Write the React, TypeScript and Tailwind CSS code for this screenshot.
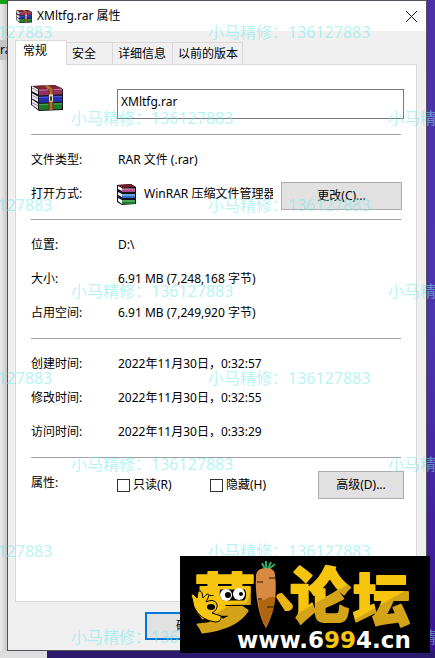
import { useState } from 'react';

const TABS = ['常规', '安全', '详细信息', '以前的版本'];
const TAB_WIDTHS = ['w-[46px]', 'w-[60px]', 'w-[70px]'];

const SIZES = [
  { label: '位置:', value: 'D:\\' },
  { label: '大小:', value: '6.91 MB (7,248,168 字节)' },
  { label: '占用空间:', value: '6.91 MB (7,249,920 字节)' },
];

const DATES = [
  { label: '创建时间:', value: '2022年11月30日，0:32:57' },
  { label: '修改时间:', value: '2022年11月30日，0:32:55' },
  { label: '访问时间:', value: '2022年11月30日，0:33:29' },
];

function BooksIcon({ className }: { className: string }) {
  return (
    <svg viewBox="0 0 32 25" preserveAspectRatio="none" className={className} aria-hidden="true">
      <path d="M0 1 24 0 32 4V24L8 25 0 19Z" fill="#17131c" />
      <path d="M1 1 7 4V9L1 6ZM1 8 7 11V16L1 13ZM1 14 7 18V23L1 19Z" fill="#f0eef2" />
      <path d="M1 3 7 6M1 10 7 13M1 17 7 20" stroke="#9b97a0" strokeWidth="1" />
      <path d="M2 1 23 0 31 3 8 4Z" fill="#7c2438" />
      <path d="M8 4 31 3V9L8 10Z" fill="#97305e" />
      <path d="M8 5 31 4" stroke="#c96a96" strokeWidth="1" />
      <path d="M8 11 31 10V16L8 17Z" fill="#2530b0" />
      <path d="M8 12 31 11" stroke="#4f62dc" strokeWidth="1" />
      <path d="M8 18 31 17V23L8 24Z" fill="#1c7a24" />
      <path d="M8 19 31 18" stroke="#48b04c" strokeWidth="1" />
      <path d="M13 0 17 0 22 4V24H18V5Z" fill="#b06c30" />
      <path d="M18 4V24M22 4V24" stroke="#5c2f14" strokeWidth="1" />
      <rect x="18" y="9" width="4" height="7" fill="#d9d5c8" />
      <rect x="19" y="11" width="2" height="4" fill="#3b3838" />
    </svg>
  );
}

function BookStackIcon({ className }: { className: string }) {
  return (
    <svg viewBox="0 0 19 21" className={className} aria-hidden="true">
      <path d="M0 1 14 0 19 3V20L5 21 0 18Z" fill="#15131a" />
      <path d="M1 2 5 4V7L1 5ZM1 8 5 10V13L1 11ZM1 14 5 16V20L1 17Z" fill="#fff" />
      <path d="M1 1 14 0 18 3 5 4Z" fill="#6d1c28" />
      <path d="M5 5H18V8H5Z" fill="#b04a86" />
      <path d="M5 5H18" stroke="#dda0c0" strokeWidth="1" />
      <path d="M5 10H18V14H5Z" fill="#2f6fc4" />
      <path d="M5 11H18" stroke="#a9d3f5" strokeWidth="1" />
      <path d="M5 16H18V20H5Z" fill="#217c2e" />
      <path d="M5 17H18" stroke="#7fce86" strokeWidth="1" />
    </svg>
  );
}

function ForumLogo() {
  return (
    <svg
      viewBox="0 0 250 97"
      className="absolute right-[5px] bottom-[5px] h-[97px] w-[250px] bg-black"
      role="img"
      aria-label="萝卜论坛 www.6994.cn"
    >
      <defs>
        <linearGradient id="gold" x1="0" y1="0" x2="0.4" y2="1">
          <stop offset="0.68" stopColor="#f7c50e" />
          <stop offset="0.7" stopColor="#d3a417" />
        </linearGradient>
      </defs>
      <g
        fill="url(#gold)"
        stroke="url(#gold)"
        strokeWidth="2"
        strokeLinejoin="round"
        fontWeight="900"
        fontFamily="'Noto Sans CJK SC', sans-serif"
      >
        <text x="14" y="70" fontSize="62">萝</text>
        <text x="110" y="62" fontSize="60">论</text>
        <text x="173" y="65" fontSize="57">坛</text>
      </g>
      {/* hand */}
      <g>
        <path
          d="M14 51 12 42Q10 38 13 38L17 42 18 36Q20 33 22 37L23 42 27 38Q30 37 28 42L26 46Q34 42 37 48 38 54 32 57L41 60Q42 66 35 66 20 64 14 51Z"
          fill="#f7c50e"
          stroke="#000"
          strokeWidth="1"
        />
        <ellipse cx="31" cy="51" rx="4" ry="3" fill="#000" />
      </g>
      {/* eyes */}
      <path d="M39 32H66Q70 40 65 46H43Q36 42 39 32Z" fill="#000" stroke="#f7c50e" strokeWidth="3" />
      <circle cx="46" cy="39" r="6" fill="#fff" />
      <circle cx="59" cy="38" r="6" fill="#fff" />
      <circle cx="48" cy="39" r="3" fill="#000" />
      <circle cx="61" cy="38" r="2" fill="#000" />
      {/* carrot, with the short stroke beside it */}
      <path d="M85 13 82 7M86 13 86 5M88 13 91 6M89 13 95 8" stroke="#2fa866" strokeWidth="2" />
      <path d="M76 19Q77 12 86 12T95 19Q97 35 94 50 90 65 86 72 81 65 78 50 75 34 76 19Z" fill="#d98a42" />
      <path d="M78 42Q82 46 86 43T95 41Q94 58 86 72 79 60 78 42Z" fill="#b0660f" />
      <path d="M77 26H83M89 22H96M78 43H82M87 51H94" stroke="#2a1405" strokeWidth="1" />
      <path d="M96 41Q97 37 102 37L112 48Q115 52 109 55L105 55Z" fill="#e9b414" />
      <text
        x="57"
        y="92"
        fontSize="23"
        fontWeight="700"
        fontFamily="'DejaVu Sans', sans-serif"
        fill="#fff"
      >
        www.6<tspan fill="#f7c50e">99</tspan>4.cn
      </text>
    </svg>
  );
}

function Watermark() {
  return (
    <div
      aria-hidden="true"
      className="pointer-events-none absolute inset-0 overflow-hidden text-base leading-5 text-[#78eaea]/55"
    >
      {[0, 1, 2, 3].map((n) => (
        <div key={n} className="h-[173px] pt-[22px] whitespace-nowrap">
          <div className="-ml-[110px] flex h-[86px]">
            <span className="w-[318px] shrink-0">小马精修：136127883</span>
            <span className="w-[318px] shrink-0">小马精修：136127883</span>
          </div>
          <div className="ml-[71px] flex">
            <span className="w-[317px] shrink-0">小马精修：136127883</span>
            <span className="w-[317px] shrink-0">小马精修：136127883</span>
          </div>
        </div>
      ))}
    </div>
  );
}

function InfoRow({ label, value }: { label: string; value: string }) {
  return (
    <div className="flex h-[34px] items-center">
      <dt className="w-[87px] shrink-0">{label}</dt>
      <dd>{value}</dd>
    </div>
  );
}

function PropertiesDialog() {
  const [tab, setTab] = useState(TABS[0]);
  const [name, setName] = useState('XMltfg.rar');

  return (
    <div className="flex min-w-0 flex-1 flex-col border border-[#55505c] bg-[#f0f0f0]">
      <header className="flex h-[30px] items-center bg-white pl-2">
        <BooksIcon className="h-[13px] w-4" />
        <h1 className="ml-[5px] flex-1">XMltfg.rar 属性</h1>
        <button type="button" aria-label="关闭" className="mr-2 p-px">
          <svg viewBox="0 0 11 11" className="h-[11px] w-[11px]" stroke="#111" strokeWidth="1" aria-hidden="true">
            <path d="M0 0 11 11M11 0 0 11" />
          </svg>
        </button>
      </header>

      <div className="flex flex-1 flex-col pt-[9px] pr-[9px] pl-[7px]">
        <div role="tablist" className="flex items-end">
          {TABS.map((t, i) => (
            <button
              key={t}
              type="button"
              role="tab"
              aria-selected={t === tab}
              onClick={() => setTab(t)}
              className={
                i === 0
                  ? 'relative -mb-px h-[25px] w-[52px] border border-b-0 border-[#d9d9d9] bg-white pb-1 pl-[7px] text-left'
                  : `h-[22px] border-t border-r border-[#d9d9d9] pl-[5px] text-left ${TAB_WIDTHS[i - 1]}`
              }
            >
              {t}
            </button>
          ))}
        </div>

        <main className="border border-[#d9d9d9] bg-white pr-[15px] pb-[101px] pl-[15px]">
          <div className="flex h-[69px] items-start pt-5">
            <BooksIcon className="h-[26px] w-8" />
            <input
              type="text"
              aria-label="文件名"
              value={name}
              onChange={(e) => setName(e.target.value)}
              className="-mr-[3px] mt-1 ml-[54px] h-[30px] min-w-0 flex-1 border border-[#7a7a7a] px-[3px] pb-[6px] outline-none"
            />
          </div>

          <section className="border-t border-[#a0a0a0] py-2">
            <dl>
              <InfoRow label="文件类型:" value="RAR 文件 (.rar)" />
              <div className="flex h-[34px] items-center">
                <dt className="w-[86px] shrink-0">打开方式:</dt>
                <dd className="flex min-w-0 flex-1 items-center">
                  <BookStackIcon className="h-[21px] w-[19px] shrink-0" />
                  <span className="mx-2 min-w-0 flex-1 overflow-hidden whitespace-nowrap">
                    WinRAR 压缩文件管理器
                  </span>
                  <button
                    type="button"
                    className="-mr-px mt-1 h-7 w-[121px] shrink-0 border border-[#adadad] bg-[#e1e1e1]"
                  >
                    更改(C)...
                  </button>
                </dd>
              </div>
            </dl>
          </section>

          <section className="border-t border-[#a0a0a0] py-2">
            <dl>
              {SIZES.map((r) => (
                <InfoRow key={r.label} label={r.label} value={r.value} />
              ))}
            </dl>
          </section>

          <section className="border-t border-[#a0a0a0] py-2">
            <dl>
              {DATES.map((r) => (
                <InfoRow key={r.label} label={r.label} value={r.value} />
              ))}
            </dl>
          </section>

          <section className="flex h-[43px] items-start border-t border-[#a0a0a0] pt-[13px]">
            <span className="w-[86px] leading-6">属性:</span>
            <label className="flex h-7 w-[93px] items-center gap-[3px]">
              <input type="checkbox" className="h-[13px] w-[13px] appearance-none border border-[#333] bg-white checked:bg-[#0078d7]" />
              只读(R)
            </label>
            <label className="flex h-7 flex-1 items-center gap-[3px]">
              <input type="checkbox" className="h-[13px] w-[13px] appearance-none border border-[#333] bg-white checked:bg-[#0078d7]" />
              隐藏(H)
            </label>
            <button type="button" className="-mr-[3px] h-7 w-[86px] border border-[#adadad] bg-[#e1e1e1]">
              高级(D)...
            </button>
          </section>
        </main>

        <footer className="flex pt-[10px] pb-[10px] pl-[130px]">
          <button type="button" className="h-7 w-[86px] border-2 border-[#0078d7] bg-[#e1e1e1]">
            确定
          </button>
        </footer>
      </div>
    </div>
  );
}

export default function App() {
  return (
    <div className="relative flex min-h-screen flex-col overflow-hidden bg-[#2c1a6e] font-['Noto_Sans','Noto_Sans_CJK_SC',sans-serif] text-xs text-black">
      <div className="flex flex-1">
        <div className="w-[7px] shrink-0 overflow-hidden bg-linear-to-r from-[#ececec] to-[#c8c8c8]">
          <div className="h-1 bg-[#16a016]" />
          <div className="mt-9 h-5 bg-[#c4c4c4] leading-5">rar</div>
        </div>
        <PropertiesDialog />
        <div className="w-2 shrink-0 bg-linear-to-b from-[#4a31ab] via-[#4a35b0] to-[#3a1295]" />
      </div>
      <div className="flex h-[7px]">
        <div className="w-[47px] bg-[#dedede]" />
      </div>
      <Watermark />
      <ForumLogo />
    </div>
  );
}
